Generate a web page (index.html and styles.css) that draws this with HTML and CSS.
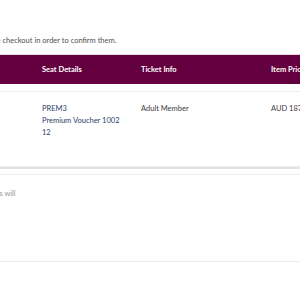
FILE: index.html
```html
<!DOCTYPE html>
<html>
<head>
<meta charset="utf-8">
<link rel="stylesheet" href="styles.css">
</head>
<body>
<div class="page">
  <p class="intro">Please complete checkout in order to confirm them.</p>
  <div class="thead">
    <div class="cell"></div>
    <div class="cell">Seat Details</div>
    <div class="cell">Ticket Info</div>
    <div class="cell">Item Price</div>
  </div>
  <div class="card">
    <div class="row">
      <div class="cell"></div>
      <div class="cell seat">PREM3<br>Premium Voucher 1002 12</div>
      <div class="cell info">Adult Member</div>
      <div class="cell info">AUD 187.00</div>
    </div>
  </div>
  <div class="card note">
    <p class="notetext">Your items will</p>
  </div>
</div>
</body>
</html>
```
FILE: styles.css
```css
html, body { margin: 0; padding: 0; background: #fff; }
body { font-family: Lato, "Open Sans", sans-serif; font-size: 7.5px; color: #555; overflow: hidden; }
.page { width: 340px; }
.intro { margin: 0; padding-top: 36px; height: 18px; line-height: 10px; white-space: nowrap; text-indent: -53px; color: #505050; }
.thead { display: grid; grid-template-columns: 42px 99px 130px 1fr; height: 29px; align-items: center; background: #650040; border-top: 1px solid #e6d6de; color: #fff; font-weight: 700; }
.card { border: 1px solid #ececec; border-left: none; box-shadow: 0 2px 0 #e4e4e4; margin-top: 7px; background: #fff; }
.row { display: grid; grid-template-columns: 42px 99px 130px 1fr; height: 74px; padding-top: 11px; box-sizing: border-box; line-height: 12px; }
.seat { color: #2c3e66; width: 82px; }
.info { color: #3a3a3a; }
.note { margin-top: 7px; height: 86px; }
.notetext { margin: 0; padding-top: 14px; line-height: 10px; white-space: nowrap; text-indent: -32px; color: #999; }
```
